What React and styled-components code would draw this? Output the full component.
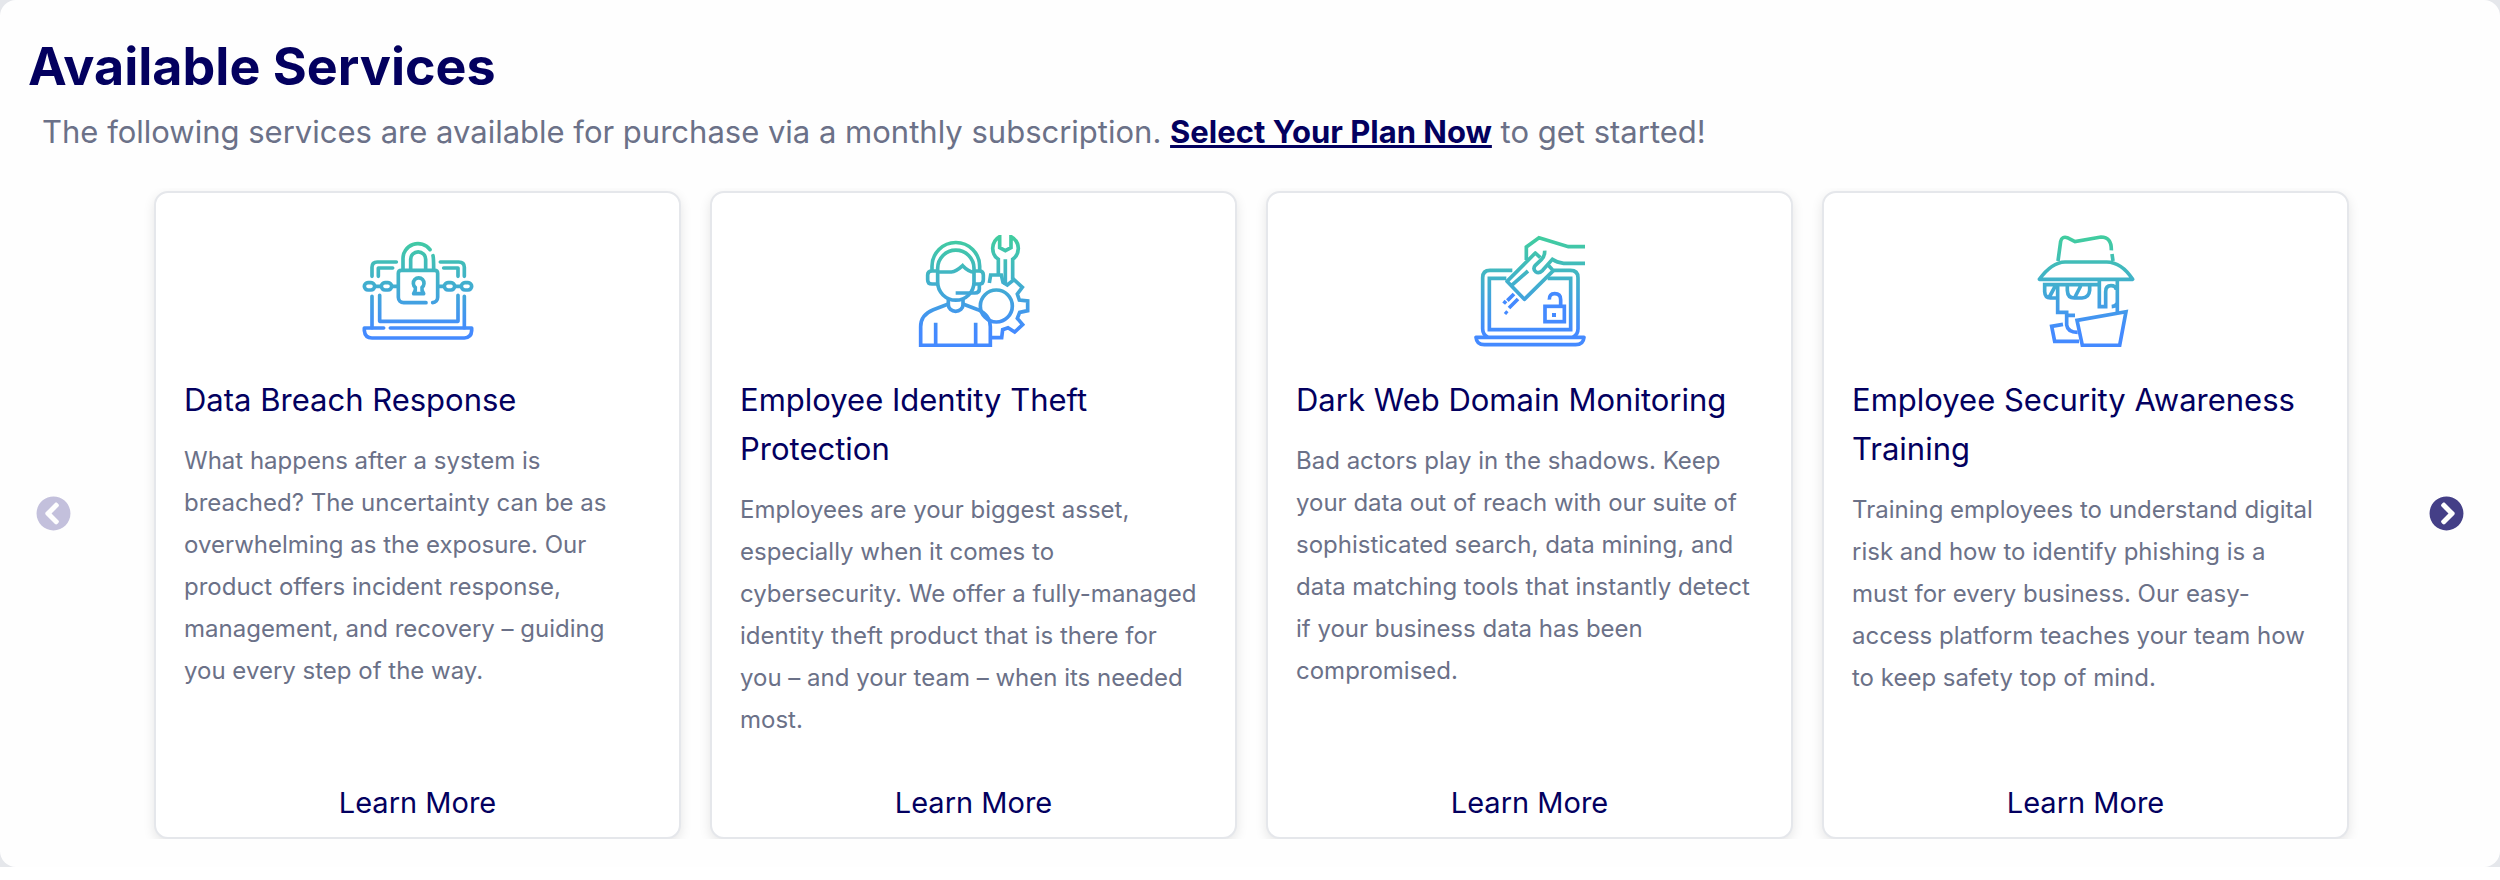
import { useId } from "react"
import styled, { createGlobalStyle } from "styled-components"
import { FaChevronCircleLeft, FaChevronCircleRight } from "react-icons/fa";

const GlobalStyle = createGlobalStyle`
    * {
        box-sizing: border-box;
    }
    body {
        margin: 0;
        font-family: "Inter", sans-serif;
    }
`;
const Backdrop = styled.div`
    width: 100%;
    background-color: #e5e7eb;
`;
const Panel = styled.section`
    width: 100%;
    padding: 34px 0 28px;
    background-color: #fefefe;
    border-radius: 16px;
`;
const Title = styled.h2`
    margin: 0;
    padding: 0 28px;
    font-size: 52px;
    line-height: 66px;
    font-weight: 700;
    color: #03005f;
`;
const Lead = styled.p`
    margin: 0;
    padding: 8px 42px 0;
    font-size: 31px;
    line-height: 48px;
    font-weight: 400;
    color: #6b7188;
`;
const PlanLink = styled.a`
    font-weight: 700;
    color: #03005f;
    text-decoration: underline;
`;
const Carousel = styled.div`
    display: flex;
    align-items: center;
    padding: 0 36px;
    margin-top: 32px;
`;
const ArrowButton = styled.button`
    display: flex;
    flex: none;
    padding: 0;
    border: none;
    background: none;
    font-size: 35px;
    color: #443f87;
    cursor: pointer;

    &:disabled {
        color: #c3c0dc;
        cursor: default;
    }
`;
const Track = styled.ul`
    display: grid;
    flex: 1;
    grid-template-columns: repeat(4, minmax(0, 1fr));
    gap: 29px;
    margin: 0 68px;
    padding: 3px 12px 0 15px;
    list-style: none;
    overflow: hidden;
`;
const Card = styled.li`
    display: flex;
    flex-direction: column;
    padding: 42px 28px 13px;
    border: 2px solid #e5e7eb;
    border-radius: 14px;
    background-color: white;
    box-shadow: 0 4px 12px rgba(0, 0, 0, 0.1);
`;
const IconBox = styled.svg`
    width: 112px;
    height: 112px;
    margin: 0 auto 28px;
    fill: none;
    stroke-width: 11;
`;
const CardTitle = styled.h3`
    margin: 0;
    font-size: 31px;
    line-height: 49px;
    font-weight: 400;
    color: #03005f;
`;
const CardText = styled.p`
    margin: 16px 0 41px;
    font-size: 24px;
    line-height: 42px;
    font-weight: 400;
    color: #6b7188;
`;
const LearnMore = styled.button`
    align-self: center;
    margin-top: auto;
    padding: 0;
    border: none;
    background: none;
    font-family: inherit;
    font-size: 29px;
    line-height: 42px;
    font-weight: 400;
    color: #03005f;
    cursor: pointer;
`;

function GradientIcon({ viewBox, children }) {
    const id = useId();
    return (
        <IconBox viewBox={viewBox} stroke={`url(#${id})`} aria-hidden="true">
            <defs>
                <linearGradient id={id} gradientUnits="userSpaceOnUse" x1="0" y1="40" x2="0" y2="320">
                    <stop offset="0" stopColor="#41cca0" />
                    <stop offset="0.5" stopColor="#41aecf" />
                    <stop offset="1" stopColor="#448aff" />
                </linearGradient>
            </defs>
            {children}
        </IconBox>
    )
}

function BreachIcon() {
    return (
        <GradientIcon viewBox="66 30 336 336">
            <g strokeLinecap="round" strokeLinejoin="round">
                <path d="M189 132V103A45 45 0 0 1 270 74M279 92Q281 100 281 132M212 132V103A22 22 0 0 1 257 103V132" />
                <path d="M258 233H191A16 16 0 0 1 175 217V145Q175 136 184 136H284Q293 136 293 145V217A16 16 0 0 1 278 233" />
                <path d="M221 206Q228 196 226 187A16 16 0 1 1 246 187Q244 196 251 206Z" />
                <path d="M169 111H112Q96 111 96 127V154M158 129H115V154M301 111H356Q373 111 373 127V154M311 129H354V154" />
                <rect x="73" y="173" width="31" height="22" rx="11" />
                <rect x="124" y="173" width="31" height="22" rx="11" />
                <rect x="313" y="173" width="31" height="22" rx="11" />
                <rect x="364" y="173" width="31" height="22" rx="11" />
                <path d="M105 184H123M156 184H174M294 184H312M345 184H363" />
                <path d="M96 214V308M119 211V289H354V211M373 214V308" />
                <path d="M131 309H73V317Q75 339 96 339H373Q394 338 395 317V309H151" />
            </g>
        </GradientIcon>
    )
}

function SupportIcon() {
    return (
        <GradientIcon viewBox="54 30 336 336">
            <path d="M96 138V124A71 71 0 0 1 239 124V138" />
            <path d="M113 130A54 54 0 0 1 222 130V172A54 53 0 0 1 113 172Z" />
            <path d="M113 138H96Q83 138 83 150V164Q83 177 96 177H113M222 138H238Q250 138 250 150V164Q250 177 238 177H222" />
            <path d="M113 141H154Q168 140 188 122Q206 141 222 141M167 204H225Q238 204 238 192V178" />
            <path d="M145 222V239A22 20 0 0 0 189 239V222" />
            <path d="M147 236L100 254Q62 269 62 305V361H271V305Q270 269 234 254L187 236M107 293V361M227 293V361" />
            <circle cx="289" cy="243" r="48" />
            <path d="M295 148V103Q278 92 278 70Q279 46 299 35V68L316 77L333 68V35Q354 46 355 70Q354 92 338 103V164M316 103V180" />
            <path d="M268 174L272 150H304L309 172L322 180L342 164L367 187L352 207L358 225L383 228V257L359 262L352 280L368 299L344 321L324 308L308 314L305 338H272" />
        </GradientIcon>
    )
}

function DarkWebIcon() {
    return (
        <GradientIcon viewBox="57 30 336 336">
            <path d="M172 136H105Q83 136 83 158V311Q83 328 98 336M297 136H346Q369 136 369 158V311Q369 328 354 336" />
            <path d="M154 160H103V314H347V160H278" />
            <path d="M63 337H387Q385 359 362 359H88Q65 359 63 337Z" strokeLinejoin="round" />
            <path d="M214 105V66L252 38L340 65H390" />
            <path d="M390 115H326Q306 113 292 103L263 136Q252 147 242 140Q232 131 241 121L259 104Q270 93 269 77" />
            <path d="M256 98L241 84L156 169L208 223L295 137L280 121M169 182L219 138" strokeLinejoin="round" />
            <g stroke="#448aff">
                <path d="M177 207L157 227M189 222L162 249M153 228L146 236M150 260L157 266" />
                <rect x="270" y="244" width="58" height="46" />
                <path d="M283 224Q282 206 299 206Q317 206 317 224V244" />
                <rect x="294" y="267" width="6" height="6" strokeWidth="6" />
            </g>
        </GradientIcon>
    )
}

function SpyIcon() {
    return (
        <GradientIcon viewBox="45 30 336 336">
            <path d="M129 108L137 49Q141 33 157 38L180 50L258 36Q290 36 289 76M291 87L294 108" />
            <path d="M73 163Q110 112 150 111H275Q320 112 353 163Z" strokeLinejoin="round" />
            <path d="M250 179H89V200Q90 219 106 219H128M157 181V196Q158 219 178 219H201Q222 218 224 196V181M121 183L103 216M197 183L180 216" />
            <path d="M128 181V262H155V300Q158 322 188 322M155 271H180" />
            <path d="M253 165V245H272V200Q272 182 288 182Q302 182 304 194M307 165V262M290 245Q303 244 307 234" />
            <path d="M186 286L333 260L314 361H202Z" />
            <path d="M144 298L110 304L119 349H192" />
        </GradientIcon>
    )
}

// \u00a0 keeps short words with the word that follows
const services = [
    {
        title: "Data Breach Response",
        text: "What happens after a system is breached? The uncertainty can be as overwhelming as the exposure. Our product offers incident response, management, and recovery – guiding you\u00a0every step of the way.",
        Icon: BreachIcon,
    },
    {
        title: "Employee Identity Theft Protection",
        text: "Employees are your biggest asset, especially when it comes to cybersecurity. We offer a fully-managed identity theft product that is there for you\u00a0– and your team – when its needed most.",
        Icon: SupportIcon,
    },
    {
        title: "Dark Web Domain Monitoring",
        text: "Bad actors play in the shadows. Keep your data out of reach with our suite of sophisticated search, data mining, and data matching tools that instantly detect if\u00a0your business data has been compromised.",
        Icon: DarkWebIcon,
    },
    {
        title: "Employee Security Awareness Training",
        text: "Training employees to understand digital risk and how to identify phishing is a must for every business. Our easy-access platform teaches your team how to keep safety top of mind.",
        Icon: SpyIcon,
    },
];

export default function App() {
    return (
        <>
            <GlobalStyle />
            <Backdrop>
                <Panel>
                    <Title>Available Services</Title>
                    <Lead>
                        The following services are available for purchase via a monthly subscription.{" "}
                        <PlanLink href="#plans">Select Your Plan Now</PlanLink> to get started!
                    </Lead>
                    <Carousel>
                        <ArrowButton type="button" aria-label="Previous services" disabled>
                            <FaChevronCircleLeft />
                        </ArrowButton>
                        <Track>
                            {services.map(({ title, text, Icon }) => (
                                <Card key={title}>
                                    <Icon />
                                    <CardTitle>{title}</CardTitle>
                                    <CardText>{text}</CardText>
                                    <LearnMore type="button">Learn More</LearnMore>
                                </Card>
                            ))}
                        </Track>
                        <ArrowButton type="button" aria-label="Next services">
                            <FaChevronCircleRight />
                        </ArrowButton>
                    </Carousel>
                </Panel>
            </Backdrop>
        </>
    )
}
